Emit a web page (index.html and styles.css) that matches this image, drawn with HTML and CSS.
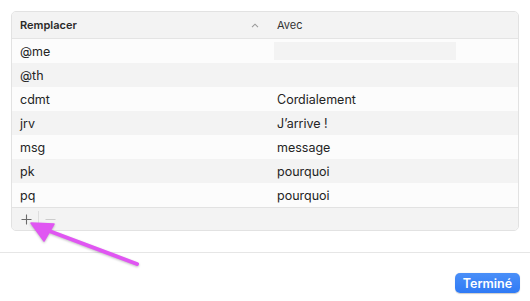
FILE: index.html
```html
<!DOCTYPE html>
<html lang="fr">
<head>
<meta charset="utf-8">
<link rel="stylesheet" href="styles.css">
</head>
<body>
<div class="page">
  <div class="content">
    <div class="table">
      <div class="row head">
        <div class="c1"><span class="hname">Remplacer</span><svg class="chev" width="8" height="5" viewBox="0 0 8 5"><path d="M1 4.2 L4 1.2 L7 4.2" fill="none" stroke="#9a9a9a" stroke-width="1.1"/></svg></div>
        <div class="c2 hname2">Avec</div>
      </div>
      <div class="row odd"><div class="c1">@me</div><div class="c2"><div class="field"></div></div></div>
      <div class="row even"><div class="c1">@th</div><div class="c2"></div></div>
      <div class="row odd"><div class="c1">cdmt</div><div class="c2">Cordialement</div></div>
      <div class="row even"><div class="c1">jrv</div><div class="c2">J’arrive !</div></div>
      <div class="row odd"><div class="c1">msg</div><div class="c2">message</div></div>
      <div class="row even"><div class="c1">pk</div><div class="c2">pourquoi</div></div>
      <div class="row odd"><div class="c1">pq</div><div class="c2">pourquoi</div></div>
      <div class="foot">
        <svg class="ico" width="11" height="11" viewBox="0 0 11 11"><path d="M5.5 0.5 V10.5 M0.5 5.5 H10.5" stroke="#6a6a6a" stroke-width="1.1"/></svg>
        <span class="sep"></span>
        <svg class="ico" width="11" height="11" viewBox="0 0 11 11"><path d="M0.5 5.5 H10.5" stroke="#cccccc" stroke-width="1.1"/></svg>
      </div>
    </div>
  </div>
  <div class="bottom">
    <button class="done">Terminé</button>
  </div>
  <svg class="arrow" width="530" height="301" viewBox="0 0 530 301">
    <line x1="137" y1="264" x2="44" y2="229" stroke="#e056f2" stroke-width="4" stroke-linecap="round"/>
    <path d="M31 223 L54 224 L44 241 Z" fill="#e056f2" stroke="#e056f2" stroke-width="1.5" stroke-linejoin="round"/>
  </svg>
</div>
</body>
</html>
```
FILE: styles.css
```css
* { box-sizing: border-box; }
html, body { margin: 0; padding: 0; background: #ffffff; }
body { font-family: "Inter", "Liberation Sans", sans-serif; color: #242424; font-size: 12.5px; }
.page { position: relative; width: 530px; height: 301px; overflow: hidden; }
.content { padding: 11px 11px 0 11px; }
.table {
  width: 508px;
  border: 1px solid #e2e2e2;
  border-radius: 5px;
  overflow: hidden;
  background: #fcfcfc;
}
.row { display: flex; height: 24px; align-items: center; }
.row.head { height: 27px; background: #f3f3f3; border-bottom: 1px solid #e4e4e4; }
.c1 { width: 256px; padding-left: 8px; display: flex; align-items: center; }
.c2 { flex: 1; padding-left: 9px; display: flex; align-items: center; height: 100%; }
.hname { font-weight: 600; font-size: 11px; color: #2a2a2a; flex: 1; }
.chev { margin-right: 9px; }
.hname2 { font-size: 11px; color: #333; }
.row.odd { background: #fcfcfc; }
.row.even { background: #f3f3f3; }
.field { width: 182px; height: 18px; margin-left: -3px; background: #f3f3f3; }
.foot {
  height: 23px;
  background: #f3f3f3;
  border-top: 1px solid #e2e2e2;
  display: flex;
  align-items: center;
  padding-left: 5px;
}
.ico { display: block; margin: 0 4px; }
.sep { width: 1px; height: 16px; background: #dedede; margin: 0 2px; }
.bottom {
  margin-top: 21px;
  border-top: 1px solid #e6e6e6;
  display: flex;
  justify-content: flex-end;
  padding: 20px 10px 0 0;
}
.done {
  width: 65px;
  height: 20px;
  border: none;
  border-radius: 5px;
  background: linear-gradient(#4a8ff8, #2f7af5);
  color: #fff;
  font-family: "Inter", "Liberation Sans", sans-serif;
  font-size: 12.5px;
  font-weight: 600;
  padding: 0;
  box-shadow: 0 0.5px 1px rgba(0,0,0,0.2);
}
.arrow { position: absolute; left: 0; top: 0; pointer-events: none; filter: drop-shadow(0 1px 1px rgba(0,0,0,0.25)); }
```
